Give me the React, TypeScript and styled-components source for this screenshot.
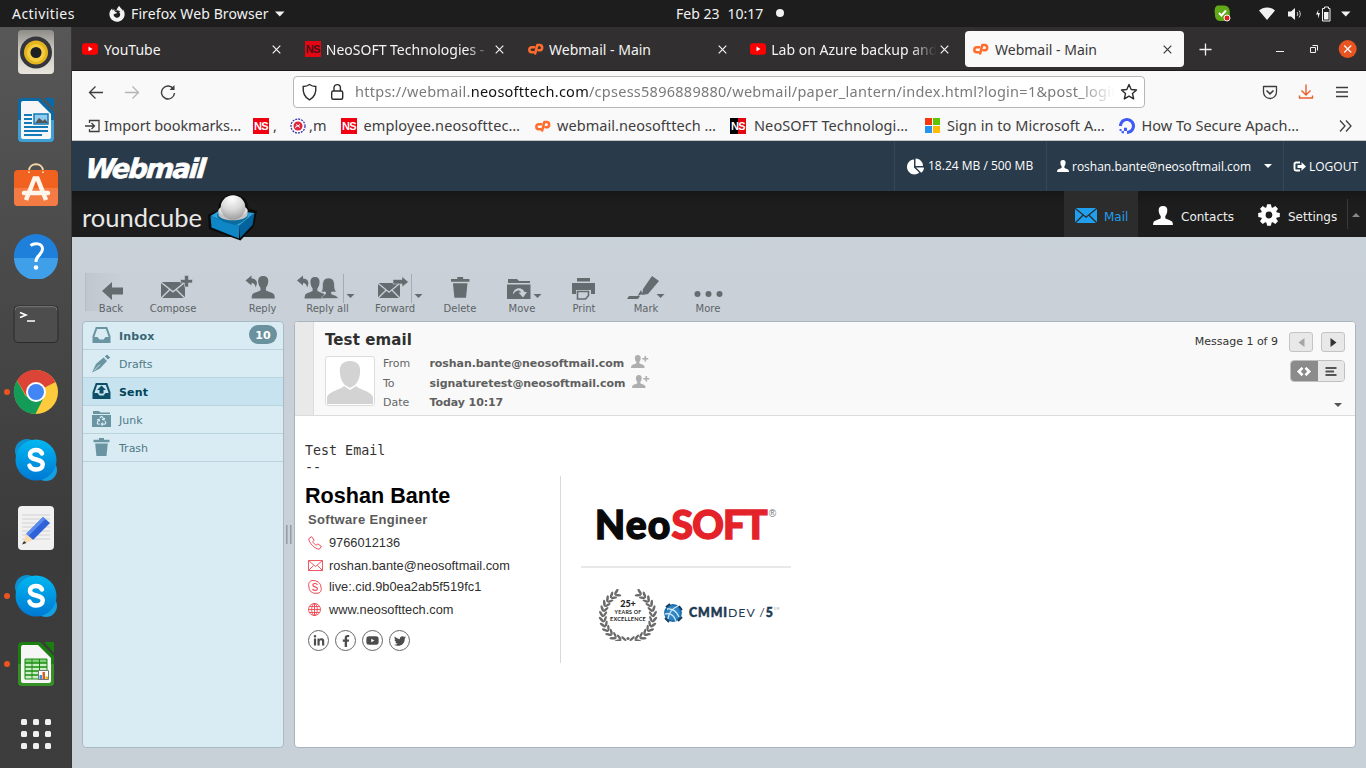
import React from 'react';
import styled, { createGlobalStyle } from 'styled-components';
import { FaFirefoxBrowser, FaChartPie, FaLinkedinIn, FaFacebookF, FaTwitter, FaYoutube, FaRecycle } from 'react-icons/fa';
import { SiDigitalocean } from 'react-icons/si';

const ui = '"Noto Sans", "Open Sans", sans-serif';
const rc = '"DejaVu Sans", Verdana, sans-serif';

const GlobalStyle = createGlobalStyle`
  * { box-sizing: border-box; }
  html, body { margin: 0; padding: 0; overflow: hidden; }
  svg { display: block; flex: none; }
`;

/* ---------- desktop shell ---------- */
const Desktop = styled.div`
  width: 1366px; height: 768px; overflow: hidden;
  display: grid; grid-template: 27px 741px / 72px 1294px;
`;
const TopBar = styled.header`
  grid-column: 1 / -1; background: #1d1d1d; color: #f2f2f2;
  font: 14px/27px ${ui}; display: flex; align-items: center; white-space: nowrap;
`;
const Activities = styled.div`width: 109px; padding-left: 12px; letter-spacing: .45px;`;
const AppMenu = styled.div`width: 567px; display: flex; align-items: center; gap: 6px; letter-spacing: .12px;`;
const Clock = styled.div`display: flex; align-items: center; gap: 8px; padding-bottom: 1px;`;
const Dot = styled.span`width: 8px; height: 8px; border-radius: 50%; background: #f2f2f2; margin-left: 5px;`;
const Tray = styled.div`margin-left: auto; display: flex; align-items: center; padding-right: 11px;`;
const TrayCell = styled.div<{ $w: number }>`width: ${p => p.$w}px; display: flex; justify-content: center;`;
const SkypeStatus = styled(TrayCell)`margin-right: 23px;`;

const Dock = styled.aside`
  background: linear-gradient(#575757, #3b3b3b 70%, #3d3d3d); overflow: hidden;
  display: flex; flex-direction: column; justify-content: flex-end; border-right: 1px solid #373737;
`;
const DockItem = styled.div<{ $running?: boolean }>`
  flex: none; height: 68px; display: grid; grid-template-columns: 13px 46px; align-items: center;
  &::before { content: ''; width: 6px; height: 6px; margin-left: 4px; border-radius: 50%; background: ${p => (p.$running ? '#e95420' : 'transparent')}; }
`;
const AppsGrid = styled.div`
  flex: none; height: 70px; padding: 21px 0 0 21px;
  display: grid; grid-template: repeat(3, 6px) / repeat(3, 6px); gap: 6px;
`;
const AppsDot = styled.span`background: #f0f0f0; border-radius: 1.5px;`;

/* ---------- browser ---------- */
const Browser = styled.main`display: flex; flex-direction: column; min-width: 0;`;
const TabStrip = styled.div`
  height: 44px; background: #322f30; border-bottom: 1px solid #1c1a1b; padding: 4px 9px 3px 2px;
  display: flex; gap: 3.75px;
`;
const Tab = styled.div<{ $active?: boolean }>`
  width: 219px; height: 36px; flex: none; border-radius: 4px; padding: 0 12px 0 8px;
  display: flex; align-items: center; gap: 5px; font: 14px/36px ${ui};
  background: ${p => (p.$active ? '#f9f9f9' : 'transparent')}; color: ${p => (p.$active ? '#3b3838' : '#f4f4f4')};
`;
const TabTitle = styled.span<{ $fade?: boolean; $gap?: number }>`
  flex: 1; overflow: hidden; white-space: nowrap; padding-top: 1px; margin-left: ${p => p.$gap || 0}px;
  ${p => p.$fade && 'margin-right: -3px; mask-image: linear-gradient(90deg, #000 84%, transparent 99%);'}
`;
const WindowControls = styled.div`margin-left: auto; display: flex; align-items: center;`;
const Toolbar = styled.div`height: 70px; background: #f9f9f9; border-bottom: 1px solid #c6c6c6;`;
const NavRow = styled.div`height: 41px; display: flex; align-items: center; padding: 0 8px 0 8px;`;
const NavButton = styled.div<{ $dim?: boolean }>`
  width: 36px; padding-left: 8px; height: 32px; display: flex; align-items: center; color: ${p => (p.$dim ? '#b5b5b5' : '#3d3d3d')};
`;
const UrlBox = styled.div`
  margin-left: 105px; width: 852px; height: 32px; border: 1px solid #b7b7b7; border-radius: 4px; background: #fff;
  display: flex; align-items: center; padding: 0 6px 0 7px; color: #2b2b2b;
`;
const Url = styled.div`
  margin: 0 5px 0 8px; width: 760px; overflow: hidden; white-space: nowrap; font: 14.5px/26px ${ui}; padding-bottom: 2px; letter-spacing: .26px; color: #7a7a7a;
  mask-image: linear-gradient(90deg, #000 95%, transparent 100%);
`;
const Host = styled.span`color: #111;`;
const NavTools = styled.div`margin-left: auto; display: flex; gap: 20px; padding-right: 8px; color: #3d3d3d;`;
const BookmarkRow = styled.div`height: 28px; display: flex; align-items: center; padding-left: 13px; font: 14.5px/26px ${ui}; color: #403d3d; white-space: nowrap;`;
const Bookmark = styled.div<{ $w: number; $gap: number; $ls?: number }>`
  width: ${p => p.$w}px; display: flex; align-items: center; gap: ${p => p.$gap - 16}px; letter-spacing: ${p => p.$ls || 0}px;
`;
const BookmarkName = styled.span`padding-bottom: 2px;`;
const NsBadge = styled.span<{ $bg: string; $fg?: string }>`
  width: 16px; height: 16px; flex: none; background: ${p => p.$bg}; color: ${p => p.$fg || '#fff'};
  font: bold 11px/16px "Liberation Sans Narrow", "Liberation Sans", sans-serif; letter-spacing: -.6px; text-align: center;
`;
const MsTiles = styled.span`
  width: 16px; height: 16px; display: grid; grid-template: 7px 7px / 7px 7px; gap: 1px; flex: none;
  & > i:nth-child(1) { background: #f5360e; } & > i:nth-child(2) { background: #62c400; }
  & > i:nth-child(3) { background: #2494ef; } & > i:nth-child(4) { background: #ffbb00; }
`;

/* ---------- webmail ---------- */
const CpHeader = styled.div`height: 50px; background: #293a4a; display: flex; color: #fff; font: 12px/49px "Open Sans", sans-serif; flex: none;`;
const WebmailLogo = styled.div`
  padding: 3px 0 0 14px; font: italic bold 27px/49px ${rc}; letter-spacing: -1.7px; margin-right: auto; color: #fff;
  -webkit-text-stroke: .7px #fff; transform: skewX(-5deg);
`;
const CpCell = styled.div<{ $w: number; $pad: number; $gap?: number }>`
  width: ${p => p.$w}px; padding-left: ${p => p.$pad}px; border-left: 1px solid #35485a; display: flex; align-items: center; gap: ${p => p.$gap || 3}px; white-space: nowrap;
`;
const Quota = styled.span`padding-bottom: 2px;`;
const CpCaret = styled.i`border: 4px solid transparent; border-top-color: #fff; border-bottom: 0; margin-left: 10px;`;
const RcHeader = styled.div`height: 46px; background: linear-gradient(#171717, #1d1d1d 30%); display: flex; flex: none; font: 12px/18px ${rc}; color: #eee;`;
const RcLogo = styled.div`
  display: flex; margin-right: auto; padding-left: 10px; font: 25.5px/52px Lato, sans-serif; color: #e8e8e8;
`;
const CubeSlot = styled.div`width: 48px; height: 46px; padding-top: 3px; margin-left: 6px; position: relative; z-index: 1;`;
const Task = styled.div<{ $w: number; $pad: number; $gap: number; $on?: boolean }>`
  width: ${p => p.$w}px; padding-left: ${p => p.$pad}px; display: flex; align-items: center; gap: ${p => p.$gap}px;
  background: ${p => (p.$on ? '#2c2c2c' : 'transparent')}; color: ${p => (p.$on ? '#1f9fee' : '#eee')};
  & > svg { margin-top: 2px; }
`;
const TaskName = styled.span`padding-top: 5px;`;
const TaskEdge = styled.div`width: 19px; margin: 8px 0; border-left: 1px solid #3a3a3a; display: flex; align-items: center; padding: 2px 0 0 4px;`;
const RcBody = styled.div`flex: 1; background: linear-gradient(#c9d1d9, #c9d0d8 40px, #c8d0d8); padding: 35px 10px 0 10px;`;
const Actions = styled.div`height: 49px; padding-left: 3px; display: flex;`;
const Action = styled.div<{ $w: number; $before?: number; $back?: boolean }>`
  width: ${p => p.$w}px; margin-left: ${p => p.$before || 0}px; height: 43px; font: 10px/12px ${rc}; color: #5e6467; text-align: center; white-space: nowrap;
  & > svg { color: #656c6f; fill: #656c6f; }
  ${p => p.$back && 'background: linear-gradient(90deg, #b4bbc4 0, #c0c7cf 2px, #c9d0d8 38px) no-repeat 0 1px / 40px 38px;'}
`;
const Panes = styled.div`display: flex; height: 427px;`;
const Folders = styled.nav`width: 202px; background: #d9ecf4; border: 1px solid #a9b9c4; border-radius: 4px; overflow: hidden;`;
const Folder = styled.div<{ $kind?: 'active' | 'unread' }>`
  height: 28px; border-bottom: 1px solid #bbd3da; padding: 0 6px 0 9px; display: flex; align-items: center; gap: 8px;
  font: ${p => (p.$kind ? 'bold' : 'normal')} 11px/27px ${rc}; letter-spacing: ${p => (p.$kind ? '.2px' : '0')};
  color: ${p => (p.$kind === 'active' ? '#004458' : p.$kind ? '#376572' : '#4d7886')};
  background: ${p => (p.$kind === 'active' ? '#c7e3ef' : 'transparent')};
  & > svg { color: ${p => (p.$kind === 'active' ? '#0d4f66' : '#6b94a2')}; margin-bottom: 1px; }
`;
const FolderName = styled.span`padding-top: 1px;`;
const Badge = styled.span`
  margin: 0 0 2px auto; width: 28px; height: 19px; border-radius: 9.5px; background: #6a919e; color: #fff; text-align: center; font: bold 11px/21px ${rc};
`;
const Splitter = styled.div`width: 10px; display: flex; justify-content: center; align-items: center; gap: 2px;`;
const Grip = styled.i`width: 2px; height: 19px; background: #949ba2; border-right: 1px solid #adb4bb;`;
const Message = styled.section`width: 1062px; background: #fff; border: 1px solid #a9b4be; border-radius: 4px; overflow: hidden; color: #333;`;
const MsgHead = styled.div`height: 94px; background: #f9f9f9; border-bottom: 1px solid #dcdcdc; display: flex; font: 11px/20px ${rc};`;
const Handle = styled.div`width: 19px; background: #e9e9e9; border-right: 1px solid #dcdcdc;`;
const MsgMain = styled.div`padding: 8px 0 0 11px;`;
const Subject = styled.h1`margin: 0; font: bold 15px/20px ${rc}; color: #2f2f2f; letter-spacing: .1px;`;
const Envelope = styled.div`display: flex; padding-top: 6px;`;
const Photo = styled.div`width: 50px; height: 50px; border: 1px solid #ddd; border-radius: 3px; background: #fff; padding: 4px 1px 1px;`;
const Fields = styled.div`padding-left: 8px; margin-top: -2px;`;
const Field = styled.div`display: grid; grid-template-columns: 46.5px auto; height: 19.5px; color: #666;`;
const Value = styled.b`display: flex; gap: 7px; letter-spacing: -.08px; color: #5f5f5f; & > svg { margin-top: 1px; }`;
const MsgNav = styled.div`margin-left: auto; width: 162px; padding: 10px 10px 0 0; display: flex; flex-direction: column; align-items: flex-end;`;
const Pager = styled.div`display: flex; gap: 8px; line-height: 20px; white-space: nowrap; color: #333;`;
const Count = styled.span`margin-right: 3px;`;
const PageButton = styled.span`
  width: 24px; height: 20px; border: 1px solid #c4c4c4; border-radius: 3px; background: #e8e8e8; display: grid; place-items: center;
`;
const Toggle = styled.div`display: flex; width: 55px; height: 22px; margin-top: 8px; border: 1px solid #c0c0c0; border-radius: 4px; overflow: hidden;`;
const ToggleHalf = styled.span<{ $on?: boolean }>`flex: 1; display: grid; place-items: center; background: ${p => (p.$on ? '#8b8b8b' : '#e8e8e8')};`;
const Expand = styled.i`margin: 21px 3px 0 0; border: 4px solid transparent; border-top-color: #555; border-bottom: 0;`;

const MsgBody = styled.div`padding: 26px 10px 0; `;
const Plain = styled.pre`margin: 0; font: 13.33px/17px "DejaVu Sans Mono", monospace; color: #333;`;
const Signature = styled.div`display: flex; height: 187px; font: 12.8px/16px "Liberation Sans", Arial, sans-serif; color: #333;`;
const SigLeft = styled.div`width: 256px; border-right: 1px solid #d9d9d9;`;
const SigName = styled.div`font-size: 21.6px; font-weight: bold; color: #000; line-height: 35px; height: 35px; padding-top: 2px;`;
const SigRole = styled.div`font-size: 13px; font-weight: bold; letter-spacing: .32px; color: #595959; height: 20px; line-height: 17px; padding-left: 3px;`;
const SigRow = styled.div<{ $h: number }>`height: ${p => p.$h}px; padding-left: 3px; display: grid; grid-template-columns: 21px auto; align-items: center; color: #2f2f2f;`;
const Social = styled.div`display: flex; gap: 6px; padding: 8px 0 0 3px;`;
const SocialButton = styled.span`
  width: 21px; height: 21px; border: 1px solid #666; border-radius: 50%; display: grid; place-items: center; color: #4c4c4c;
`;
const SigRight = styled.div`width: 210px; margin-left: 20px;`;
const NeoLogo = styled.div`
  height: 92px; padding: 20px 0 0 14px; border-bottom: 2px solid #e8e8e8; display: flex;
  font: 900 39px/57px Lato, sans-serif; letter-spacing: 1.2px; color: #0a0a0a; white-space: nowrap; margin-bottom: 21px;
  -webkit-text-stroke: 1.4px currentColor;
`;
const Red = styled.span`color: #e42229; letter-spacing: -.9px;`;
const Reg = styled.span`font: 10px/30px "Liberation Sans", sans-serif; color: #777; margin: 3px 0 0 2px; -webkit-text-stroke: 0;`;
const Awards = styled.div`display: flex; padding-left: 17px; align-items: center;`;
const Globe = styled.svg`margin: 0 0 5px 5px;`;
const Cmmi = styled.div`
  font: 12.3px/16px Lato, sans-serif; letter-spacing: .95px; color: #1d3a52; padding: 0 0 5px 6px; display: flex;
  & > b { font-weight: 900; -webkit-text-stroke: .5px currentColor; }
`;
const Tm = styled.span`font-size: 3px; line-height: 8px; color: #999;`;

/* ---------- drawings ---------- */
const Cross = ({ c = 'currentColor', s = 9 }) => (
  <svg width={s} height={s} viewBox="0 0 9 9" stroke={c} strokeWidth="1.2"><path d="M.7.7l7.6 7.6M8.3.7L.7 8.3" /></svg>
);
const YouTubeIcon = () => (
  <svg width="16" height="16" viewBox="0 0 16 16"><rect y="2.2" width="16" height="11.6" rx="3" fill="#f00" /><path d="M6.5 5.6v4.6l4-2.3z" fill="#fff" /></svg>
);
const CpMark = () => (
  <svg width="16" height="16" viewBox="0 0 16 16" fill="none" stroke="#ff6c2c" strokeWidth="2.500" strokeLinecap="round" strokeLinejoin="round">
    <path d="M6.300 6.200H4a2.500 2.500 0 0 0-.3 5h2" /><path d="M7.200 12.500L9.300 4h2.700a2.700 2.700 0 0 1 0 5.300h-1.500" />
  </svg>
);
const bust = 'M10 0c3 0 4.6 2 4.3 5-.2 2.600-.9 4.300-2 5.500v2.300c.4.9 5.900 2 7 3.700.5 1 .6 2.300.6 3.500H.1c0-1.200.1-2.500.6-3.500 1.100-1.700 6.600-2.800 7-3.700v-2.300c-1.100-1.200-1.800-2.900-2-5.500C5.400 2 7 0 10 0z';
const Person = ({ w = 20, h = 20, c = 'currentColor' }) => (
  <svg width={w} height={h} viewBox="0 0 20 20" preserveAspectRatio="none" fill={c}><path d={bust} /></svg>
);
const AddPerson = () => (
  <svg width="18" height="13" viewBox="0 0 18 13" fill="#aeaeae"><path d={bust} transform="scale(.68 .65)" /><path d="M13.500 1h1.600v2h2.200v1.500h-2.200v2h-1.600v-2h-2.200V3h2.200z" /></svg>
);
const Letter = ({ x = 0, y = 0, w = 22, h = 15, line = '#c9d0d8' }) => (
  <g transform={`translate(${x} ${y}) scale(${w / 22} ${h / 15})`}>
    <path d="M0 0h22v15H0z" fill="currentColor" />
    <path d="M0 .2l11 9 11-9M.2 15l8-8M21.800 15l-8-8" fill="none" stroke={line} strokeWidth="1.300" />
  </g>
);
const gearTeeth = [0, 45, 90, 135, 180, 225, 270, 315];
const Gear = () => (
  <svg width="22" height="22" viewBox="-11 -11 22 22" fill="#fff">
    {gearTeeth.map(a => <path key={a} d="M-2.700-7l.8-3.800h3.800l.8 3.800z" transform={`rotate(${a})`} />)}
    <circle r="5.700" fill="none" stroke="#fff" strokeWidth="4.600" />
  </svg>
);
const Cube = () => (
  <svg width="49" height="47" viewBox="0 0 49 47">
    <path d="M0 21l10-5C10.500 6 16 .5 25 .5S40 5 40.500 14.500L49 17l-3 15-13.500 14.500L1 35z" fill="#0b0b0b" />
    <path d="M2.500 22L31 32v12.500L3.500 33.500z" fill="#0f86c6" /><path d="M31 32L46.500 19 44.500 31 32 44z" fill="#04629c" />
    <path d="M2.500 22L13 15.500l33.500 3.500L31 32z" fill="#2aa2da" />
    <path d="M9 20l1 4 6 4 12 3 6-3 5-4 1-4z" fill="#0c6b9f" />
    <path d="M10.500 16h29v5c-2 7-27 7-29 0z" fill="#c4c4c4" />
    <ellipse cx="25" cy="16.500" rx="14.500" ry="6" fill="#dedede" />
    <circle cx="25" cy="13.500" r="12.300" fill="url(#ball)" />
    <defs><radialGradient id="ball" cx=".45" cy=".12" r=".95"><stop offset="0" stopColor="#fff" /><stop offset=".5" stopColor="#d8d8d8" /><stop offset="1" stopColor="#949494" /></radialGradient></defs>
  </svg>
);
const Drop = ({ x = 0 }) => <path d={`M${x - 4} 294h8l-4 4z`} />;
const Sep = ({ x = 0 }) => <path d={`M${x} 274v29`} stroke="#a3abb3" fill="none" />;
const ReplyArrow = ({ x = 0 }) => <path transform={`translate(${x} 275.500)`} d="M0 5L6 0v3c5 0 7 4 4 9-.2-3-1.500-4.500-4-4.500V10z" />;
const Art = ({ x = 0, w = 0, children }: { x?: number; w?: number; children?: React.ReactNode }) => (
  <svg width={w} height="31" viewBox={`${x} 272 ${w} 31`}>{children}</svg>
);
const Can = () => <><path d="M6.500 0h6v2H19v3H0V2h6.500z" /><path d="M2 6.500h15l-1.500 15h-12z" /></>;

const Speaker = () => (
  <svg width="46" height="46" viewBox="0 0 46 46">
    <defs><linearGradient id="spk" x2="0" y2="1"><stop stopColor="#8d8b87" /><stop offset=".4" stopColor="#c6c3bc" /><stop offset="1" stopColor="#e8e5dc" /></linearGradient></defs>
    <rect x="5" y="1" width="36" height="44" rx="4" fill="url(#spk)" /><circle cx="23" cy="23.500" r="16" fill="#34363b" />
    <circle cx="23" cy="23.500" r="12" fill="#e5b520" /><circle cx="23" cy="24" r="9" fill="#f3cd3f" /><circle cx="23" cy="23.500" r="5.500" fill="#1d1f22" />
  </svg>
);
const Doc = ({ dark = '#0b6aa5', light = '#3fa0d5', children }: { dark?: string; light?: string; children?: React.ReactNode }) => (
  <svg width="46" height="46" viewBox="0 0 46 46">
    <path d="M9 1h18l14 14v26a4 4 0 0 1-4 4H9a4 4 0 0 1-4-4V5a4 4 0 0 1 4-4z" fill={dark} /><path d="M5 23h36v18a4 4 0 0 1-4 4H9a4 4 0 0 1-4-4z" fill={light} />
    <path d="M10 4h15l13 13v23a2 2 0 0 1-2 2H10a2 2 0 0 1-2-2V6a2 2 0 0 1 2-2z" fill="#f6f6f6" /><path d="M31 1h9a1 1 0 0 1 1 1v10z" fill={dark} />{children}
  </svg>
);
const Skype = () => (
  <svg width="46" height="46" viewBox="0 0 46 46">
    <defs><linearGradient id="sky" x2="0" y2="1"><stop stopColor="#00b7f0" /><stop offset="1" stopColor="#0078d4" /></linearGradient></defs>
    <circle cx="14" cy="14" r="12" fill="#0f8fd0" /><circle cx="33" cy="33" r="11" fill="#12a0e0" /><circle cx="23" cy="23" r="20.500" fill="url(#sky)" />
    <path d="M29 16.500c-1-2.300-3-3.500-6-3.500-3.700 0-6 1.800-6 4.700 0 6.300 12.700 3.300 12.700 9.800 0 3.200-2.700 5-6.400 5-3.300 0-5.800-1.200-6.800-4" fill="none" stroke="#fff" strokeWidth="4.500" strokeLinecap="round" />
  </svg>
);
const Chrome = () => (
  <svg width="46" height="46" viewBox="0 0 46 46">
    <circle cx="23" cy="23" r="22" fill="#fdcb3b" /><path d="M23 23L4 11.500A22 22 0 0 1 42.500 13z" fill="#db4437" />
    <path d="M23 23l-.5 22A22 22 0 0 1 4 11.500l9 16z" fill="#149b57" /><path d="M22.500 45L31 28l-12 4-6-4.500z" fill="#149b57" />
    <path d="M4 11.500L14 28l3-12 6-3h19.500z" fill="#db4437" />
    <circle cx="23" cy="23" r="10" fill="#fff" /><circle cx="23" cy="23" r="8" fill="#4286f5" />
  </svg>
);
const rows = [0, 4, 8, 12, 16];

const leaves = Array.from({ length: 13 }, (_, i) => 28 + i * 12);
const Laurel = () => (
  <svg width="60" height="52" viewBox="-30 -27 60 52" fill="#6a6a6a">
    {[1, -1].map(s => leaves.map(a => (
      <g key={`${s}${a}`} transform={`scale(${s} 1) rotate(${a}) translate(0 -25)`}>
        <ellipse rx="3.500" ry="1.300" transform="translate(-1 -1.800) rotate(32)" /><ellipse rx="3.200" ry="1.200" transform="translate(-1 2) rotate(-32)" />
      </g>
    )))}
    <circle cy="22.500" r="1.600" />
    <g textAnchor="middle" fill="#222" fontFamily="Lato, sans-serif">
      <text y="-9.500" fontSize="9" fontWeight="900">25+</text><text y="-2" fontSize="5.300" fontWeight="700" letterSpacing=".25">YEARS OF</text><text y="5" fontSize="5.600" fontWeight="700" letterSpacing=".2">EXCELLENCE</text>
    </g>
  </svg>
);

type TabData = { icon: React.ReactNode; title: string; fade?: boolean; active?: boolean; gap?: number };
const tabs: TabData[] = [
  { icon: <YouTubeIcon />, title: 'YouTube', gap: 1 },
  { icon: <NsBadge $bg="#e30613" $fg="#4a1016">NS</NsBadge>, title: 'NeoSOFT Technologies - ', fade: true },
  { icon: <CpMark />, title: 'Webmail - Main', gap: 0.5 },
  { icon: <YouTubeIcon />, title: 'Lab on Azure backup and', fade: true },
  { icon: <CpMark />, title: 'Webmail - Main', active: true, gap: 1 },
];

export default function App() {
  return (
    <Desktop>
      <GlobalStyle />
      <TopBar>
        <Activities>Activities</Activities>
        <AppMenu>
          <FaFirefoxBrowser size={16} />Firefox Web Browser
          <svg width="10" height="6" viewBox="0 0 10 6" fill="#f2f2f2"><path d="M0 .5h9.500L4.800 5.500z" /></svg>
        </AppMenu>
        <Clock><span>Feb 23</span><span>10:17</span><Dot /></Clock>
        <Tray>
          <SkypeStatus $w={16}>
            <svg width="17" height="17" viewBox="0 0 17 17"><path d="M4 .5h6c4 0 6 3 5.800 7 .5 5-2 8.500-6 8.500H6C2.500 16 .8 13 1 9.500.3 5 .5 1 4 .5z" fill="#60a917" /><path d="M5 8l2.500 2.500 4.500-5" fill="none" stroke="#fff" strokeWidth="2" /><circle cx="13" cy="13" r="3" fill="#e02020" stroke="#fff" /></svg>
          </SkypeStatus>
          <TrayCell $w={28}><svg width="16" height="13" viewBox="0 0 16 13" fill="#f2f2f2"><path d="M0 3.500C4.500-.5 11.500-.5 16 3.500L8 13z" /></svg></TrayCell>
          <TrayCell $w={28}><svg width="16" height="14" viewBox="0 0 16 14" fill="#f2f2f2"><path d="M1 4.500h3L8 1v12L4 9.500H1z" /><path d="M10 5c1 1 1 3 0 4M12 3.500c1.700 2 1.700 5 0 7" fill="none" stroke="#ccc" /></svg></TrayCell>
          <TrayCell $w={28}><svg width="16" height="16" viewBox="0 0 16 16"><path d="M3.500 3.500L1 8.500h2v4L5 7H3z" fill="#f2f2f2" /><path d="M7.500 2.500h2V1h4v1.500h1.500v12.500h-7.500z" fill="none" stroke="#f2f2f2" /><path d="M9 6h4.500v7.500H9z" fill="#f2f2f2" /></svg></TrayCell>
          <TrayCell $w={18}><svg width="10" height="6" viewBox="0 0 10 6" fill="#f2f2f2"><path d="M0 .5h9.500L4.800 5.500z" /></svg></TrayCell>
        </Tray>
      </TopBar>

      <Dock>
        <DockItem><Speaker /></DockItem>
        <DockItem>
          <Doc><path d="M11 18h8M11 22h8M11 26h8M11 30h24M11 34h24M11 38h18" stroke="#1379b8" strokeWidth="2" /><path d="M21 17h14v10H21z" fill="#8fcdf0" stroke="#1379b8" strokeWidth="1.500" /><path d="M22 26l4-5 4 3 2-2 3 4z" fill="#555" /></Doc>
        </DockItem>
        <DockItem>
          <svg width="46" height="46" viewBox="0 3 46 46" overflow="visible"><path d="M16 9c0-9 14-9 14 0" fill="none" stroke="#f3d9a6" strokeWidth="2" /><rect x="1" y="8" width="44" height="36" rx="4" fill="#f1611f" /><path d="M1 26h44v14a4 4 0 0 1-4 4H5a4 4 0 0 1-4-4z" fill="#f47c44" /><path d="M16 9.500V11M30 9.500V11" stroke="#f3d9a6" strokeWidth="2" /><path d="M13 38L21.500 16.500h3L33 38" fill="none" stroke="#fff5ea" strokeWidth="4.500" /><path d="M11 31h24" stroke="#fff5ea" strokeWidth="4.500" strokeLinecap="round" /></svg>
        </DockItem>
        <DockItem>
          <svg width="46" height="46" viewBox="0 0 46 46"><circle cx="23" cy="23" r="22" fill="#1f80dc" /><path d="M1 25a22 22 0 0 0 44 0z" fill="#3f9fe8" /><path d="M17.500 12.500c4-3 12-2.500 12 3.500 0 6-7 6.500-6.500 13" fill="none" stroke="#fff" strokeWidth="3" /><circle cx="23" cy="34.500" r="2.300" fill="#fff" /></svg>
        </DockItem>
        <DockItem>
          <svg width="46" height="46" viewBox="0 0 46 46"><rect x="1" y="5" width="44" height="36.500" rx="4" fill="#4d4d4d" stroke="#2a2a2a" /><path d="M2 9a3.500 3.500 0 0 1 3.500-3.300h35A3.500 3.500 0 0 1 44 9" fill="none" stroke="#7a7a7a" /><path d="M7 11.500l6 2.500-6 2.500M14 20h8" fill="none" stroke="#fff" strokeWidth="1.600" /></svg>
        </DockItem>
        <DockItem $running><Chrome /></DockItem>
        <DockItem><Skype /></DockItem>
        <DockItem>
          <svg width="46" height="46" viewBox="0 0 46 46"><rect x="5" y="1" width="36" height="44" rx="4" fill="#f1f1f1" /><path d="M9 10h28M9 14h28M9 18h28M9 22h28M9 26h28M9 30h28M9 34h28" stroke="#d2d2d2" /><path d="M13 29l17-17 7 6-17 17z" fill="#2f62d9" /><path d="M13 29l17-17 2.500 2-17 17z" fill="#5b8cf0" /><path d="M13 29l7 6-10 4z" fill="#f7dcb4" /><path d="M11 36l2.500 2L9 39.500z" fill="#333" /></svg>
        </DockItem>
        <DockItem $running><Skype /></DockItem>
        <DockItem $running>
          <Doc dark="#1c7d11" light="#369026">
            <path d="M12 18h22v20H12z" fill="#c9f0c4" /><path d="M12 18h22v4H12z" fill="#7ecf78" />
            {rows.map(r => <path key={r} d={`M12 ${18 + r}h22v4H12zM19 ${18 + r}v4M26.500 ${18 + r}v4`} fill="none" stroke="#1c8a12" />)}
            <path d="M25.500 29.500h10v9h-10z" fill="#fff" stroke="#777" /><path d="M26.500 34h2.500v4h-2.500z" fill="#3b92d6" /><path d="M29.500 31h2.500v7h-2.500z" fill="#d95f1e" /><path d="M32.500 35.500h2.500v2.500h-2.500z" fill="#e8b320" />
          </Doc>
        </DockItem>
        <AppsGrid>{Array.from({ length: 9 }, (_, i) => <AppsDot key={i} />)}</AppsGrid>
      </Dock>

      <Browser>
        <TabStrip>
          {tabs.map((t, i) => (
            <Tab key={i} $active={t.active}>{t.icon}<TabTitle $fade={t.fade} $gap={t.gap}>{t.title}</TabTitle><Cross /></Tab>
          ))}
          <WindowControls>
            <svg width="166" height="22" viewBox="1191 38 166 22" fill="none" stroke="#f2f2f2">
              <path d="M1199.500 49.500h12M1205.500 43.500v12" strokeWidth="1.300" /><path d="M1276 51.500h8" /><path d="M1310.500 47.500h5v5h-5zM1312.500 45.500h5v5" /><circle cx="1347.700" cy="49" r="9" fill="#e95420" stroke="none" /><path d="M1344.200 45.500l7 7M1351.200 45.500l-7 7" strokeWidth="1.400" />
            </svg>
          </WindowControls>
        </TabStrip>
        <Toolbar>
          <NavRow>
            <NavButton><svg width="16" height="16" viewBox="0 0 16 16" fill="none" stroke="currentColor" strokeWidth="1.300"><path d="M15 8.500H1.500M7.500 2.500l-6 6 6 6" /></svg></NavButton>
            <NavButton $dim><svg width="16" height="16" viewBox="0 0 16 16" fill="none" stroke="currentColor" strokeWidth="1.300"><path d="M1 8.500h13.500M8.500 2.500l6 6-6 6" /></svg></NavButton>
            <NavButton><svg width="16" height="16" viewBox="0 0 16 16" fill="none" stroke="currentColor" strokeWidth="1.400"><path d="M13.500 5A6.500 6.500 0 1 0 14.500 9" /><path d="M14.500 1v5h-5z" fill="currentColor" stroke="none" /></svg></NavButton>
            <UrlBox>
              <svg width="46" height="18" viewBox="0 0 46 18" fill="none" stroke="currentColor" strokeWidth="1.400"><path d="M8.500 1.500c2 1.500 4 2 6.300 2 .5 6-1.500 11-6.300 13.300C3.700 14.500 1.700 9.500 2.200 3.500c2.300 0 4.300-.5 6.300-2z" /><rect x="30.700" y="8" width="11" height="8.300" rx="1.500" /><path d="M33 8V4.800a3.200 3.200 0 0 1 6.400 0V8" /></svg>
              <Url>https://webmail.<Host>neosofttech.com</Host>/cpsess5896889880/webmail/paper_lantern/index.html?login=1&amp;post_login</Url>
              <svg width="18" height="18" viewBox="0 0 18 18" fill="none" stroke="currentColor" strokeWidth="1.400" strokeLinejoin="round"><path d="M9 1.500l2.200 5 5.300.5-4 3.600 1.200 5.300L9 13.200 4.300 15.900l1.200-5.300-4-3.600 5.300-.5z" /></svg>
            </UrlBox>
            <NavTools>
              <svg width="16" height="16" viewBox="0 0 16 16" fill="none" stroke="currentColor" strokeWidth="1.300"><path d="M1.500 2.500h13V8a6.500 6.500 0 0 1-13 0z" strokeLinejoin="round" /><path d="M4.500 6.500L8 9.800l3.500-3.300" strokeWidth="1.600" /></svg>
              <svg width="16" height="16" viewBox="0 0 16 16" fill="none" stroke="#e9602f" strokeWidth="1.400"><path d="M8 .5v10M3.500 6.500L8 11l4.500-4.500M1.500 11.500v2.500h13v-2.500" /></svg>
              <svg width="16" height="16" viewBox="0 0 16 16" stroke="currentColor" strokeWidth="1.300"><path d="M2 3.500h12M2 8h12M2 12.500h12" /></svg>
            </NavTools>
          </NavRow>
          <BookmarkRow>
            <Bookmark $w={168} $gap={19} $ls={-0.12}>
              <svg width="16" height="16" viewBox="0 0 16 16" fill="none" stroke="currentColor" strokeWidth="1.300"><path d="M4.500 5V2.500h9.500v11H4.500V11M0 8h9.500M6.500 5l3 3-3 3" /></svg><BookmarkName>Import bookmarks…</BookmarkName>
            </Bookmark>
            <Bookmark $w={37} $gap={20}><NsBadge $bg="#f00010">NS</NsBadge><BookmarkName>,</BookmarkName></Bookmark>
            <Bookmark $w={51} $gap={19}>
              <svg width="16" height="16" viewBox="0 0 16 16"><circle cx="8" cy="8" r="7" fill="#fff" stroke="#3a3aa8" strokeWidth="1.300" strokeDasharray="2 1" /><circle cx="8" cy="8" r="4.500" fill="#e0263c" /><path d="M5 9.500l5-3M6 6.500l4 3" stroke="#fff" /></svg><BookmarkName>,m</BookmarkName>
            </Bookmark>
            <Bookmark $w={194} $gap={22.5} $ls={0.12}><NsBadge $bg="#f00010">NS</NsBadge><BookmarkName>employee.neosofttec…</BookmarkName></Bookmark>
            <Bookmark $w={195} $gap={22} $ls={0.05}><CpMark /><BookmarkName>webmail.neosofttech …</BookmarkName></Bookmark>
            <Bookmark $w={195} $gap={24} $ls={0.1}><NsBadge $bg="linear-gradient(90deg, #000 50%, #e30613 50%)">NS</NsBadge><BookmarkName>NeoSOFT Technologi…</BookmarkName></Bookmark>
            <Bookmark $w={194} $gap={22} $ls={0.06}><MsTiles><i /><i /><i /><i /></MsTiles><BookmarkName>Sign in to Microsoft A…</BookmarkName></Bookmark>
            <Bookmark $w={220} $gap={22.5}><SiDigitalocean size={16} color="#3f5af5" /><BookmarkName>How To Secure Apach…</BookmarkName></Bookmark>
            <svg width="14" height="14" viewBox="0 0 14 14" fill="none" stroke="currentColor" strokeWidth="1.300"><path d="M1 1.500L6 7l-5 5.500M7 1.500L12 7l-5 5.500" /></svg>
          </BookmarkRow>
        </Toolbar>

        <CpHeader>
          <WebmailLogo>Webmail</WebmailLogo>
          <CpCell $w={152} $pad={12} $gap={4}><FaChartPie size={17} /><Quota>18.24 MB / 500 MB</Quota></CpCell>
          <CpCell $w={237} $pad={10}><Person w={12} h={12} />roshan.bante@neosoftmail.com<CpCaret /></CpCell>
          <CpCell $w={83} $pad={9}>
            <svg width="13" height="11" viewBox="0 0 13 11"><path d="M7 1.500H3A1.500 1.500 0 0 0 1.500 3v5A1.500 1.500 0 0 0 3 9.500h4" fill="none" stroke="#fff" strokeWidth="1.900" /><path d="M4.500 4h4V1.200l4.500 4.300-4.500 4.300V7h-4z" fill="#fff" /></svg>LOGOUT
          </CpCell>
        </CpHeader>
        <RcHeader>
          <RcLogo>roundcube<CubeSlot><Cube /></CubeSlot></RcLogo>
          <Task $on $w={74} $pad={11} $gap={7}><svg width="22" height="15" viewBox="0 0 22 15"><Letter line="#2c2c2c" /></svg><TaskName>Mail</TaskName></Task>
          <Task $w={108} $pad={15} $gap={8}><Person w={20} h={19} c="#fff" /><TaskName>Contacts</TaskName></Task>
          <Task $w={101} $pad={12} $gap={8}><Gear /><TaskName>Settings</TaskName></Task>
          <TaskEdge><svg width="8" height="4" viewBox="0 0 8 4"><path d="M4 0l4 4H0z" fill="#888" /></svg></TaskEdge>
        </RcHeader>

        <RcBody>
          <Actions>
            <Action $w={52} $back><Art x={85} w={52}><path d="M102 291l10-9v5.500h11v7h-11v5.500z" /></Art>Back</Action>
            <Action $w={72}><Art x={137} w={72}><Letter x={161} y={282} w={24} h={16} /><path d="M184.500 275.500h4v4h4v3.500h-4v4h-4v-4h-4v-3.500h4z" stroke="#c9d0d8" strokeWidth=".6" /></Art>Compose</Action>
            <Action $w={53} $before={27}><Art x={236} w={53}><ReplyArrow x={245.5} /><path d={bust} transform="translate(251.500 276) scale(1.170 1.120)" /></Art>Reply</Action>
            <Action $w={77}><Art x={289} w={77}><ReplyArrow x={297} /><path d={bust} transform="translate(304.500 277) scale(1.050 1.080)" /><path d="M328.500 278c5 0 6 4 6 8 0 3 1 5 2 6h-5v2c2 1 6 1.500 7 4.500h-17c0-2.500 3-3.500 4-4.500v-2h-4.500c1-1 1.500-3 1.500-6 0-4 1-8 6-8z" stroke="#c9d0d8" strokeWidth=".6" /><Sep x={343.5} /><Drop x={350.5} /></Art>Reply all</Action>
            <Action $w={58}><Art x={366} w={58}><Letter x={378} y={283} w={22} h={15} /><path d="M393 279.500h9v-3l6.500 5.500-6.500 5v-3h-9z" stroke="#c9d0d8" strokeWidth=".6" /><Sep x={411.5} /><Drop x={418.5} /></Art>Forward</Action>
            <Action $w={62} $before={5}><Art x={429} w={62}><g transform="translate(451 277) scale(.97)"><Can /></g></Art>Delete</Action>
            <Action $w={62}><Art x={491} w={62}><path d="M508 279h9l2 2h11v2h-22zM507 284.500h23.500v14.500H507z" /><path d="M513 294.500c0-7 9-8.500 11.500-2.500h2.500l-4 5.500-4.500-5h2.500c-1.500-3-5-2.500-8 2z" fill="#c9d0d8" /><Drop x={537.5} /></Art>Move</Action>
            <Action $w={62}><Art x={553} w={62}><path d="M577 278h13v3.500h-13zM572 283h23v11h-4v-4h-15v4h-4z" /><path d="M577.500 291.500h11v4l-3 3.500h-8z" fill="none" stroke="#656c6f" strokeWidth="1.600" /></Art>Print</Action>
            <Action $w={62}><Art x={615} w={62}><path d="M652 276l7 5-11 13-6 1 1-6zM641 290l1.500 4-5 2zM629 296h11l-2 3h-11z" /><Drop x={660.5} /></Art>Mark</Action>
            <Action $w={62}><Art x={677} w={62}><circle cx="697.500" cy="294" r="3" /><circle cx="708.500" cy="294" r="3" /><circle cx="719.500" cy="294" r="3" /></Art>More</Action>
          </Actions>

          <Panes>
            <Folders>
              <Folder $kind="unread"><svg width="19" height="16" viewBox="0 0 19 16"><path d="M4.500 1h10l3 8.500V15h-16V9.500z" fill="none" stroke="currentColor" strokeWidth="2" /><path d="M1 10h4.500l2 2.500h4L13.500 10H18v6H1z" fill="currentColor" /></svg><FolderName>Inbox</FolderName><Badge>10</Badge></Folder>
              <Folder><svg width="19" height="19" viewBox="0 0 19 19" fill="currentColor"><path d="M0 18.500L4 10l7.500-6.500 3.500 3.500L8 14.500z" /><path d="M12.500 2.500L15 0l3.500 3.500L16 6zM2 16.500l6-6" stroke="#d9ecf4" strokeWidth=".8" /></svg><FolderName>Drafts</FolderName></Folder>
              <Folder $kind="active"><svg width="19" height="16" viewBox="0 0 19 16"><path d="M4.500 1h10l3 8.500V15h-16V9.500z" fill="none" stroke="currentColor" strokeWidth="2" /><path d="M1 10h4.500l2 2.500h4L13.500 10H18v6H1zM9.500 2.500l4.500 4.500h-2.500v3.500h-4V7H5z" fill="currentColor" /></svg><FolderName>Sent</FolderName></Folder>
              <Folder><svg width="19" height="16" viewBox="0 0 19 16" fill="currentColor"><path d="M1 0h6l1.500 1.500H18V3H1zM0 4h19v12H0z" /><g color="#d9ecf4"><FaRecycle x={4.5} y={5} size={10} /></g></svg><FolderName>Junk</FolderName></Folder>
              <Folder><svg width="19" height="19" viewBox="0 0 19 19" fill="currentColor"><g transform="translate(1.500 0) scale(.84)"><Can /></g></svg><FolderName>Trash</FolderName></Folder>
            </Folders>
            <Splitter><Grip /><Grip /></Splitter>
            <Message>
              <MsgHead>
                <Handle />
                <MsgMain>
                  <Subject>Test email</Subject>
                  <Envelope>
                    <Photo><svg width="46" height="43" viewBox="0 0 46 43" fill="#d3d3d3"><path d="M23 0c8 0 11 5 10 12-.5 6-3 10-5 12l-5 3-5-3c-2-2-4.500-6-5-12C12 5 15 0 23 0z" /><path d="M17 25l6 4 6-4c2 3 15 5 17 11v7H0v-7c2-6 15-8 17-11z" /></svg></Photo>
                    <Fields>
                      <Field>From<Value>roshan.bante@neosoftmail.com<AddPerson /></Value></Field>
                      <Field>To<Value>signaturetest@neosoftmail.com<AddPerson /></Value></Field>
                      <Field>Date<Value>Today 10:17</Value></Field>
                    </Fields>
                  </Envelope>
                </MsgMain>
                <MsgNav>
                  <Pager>
                    <Count>Message 1 of 9</Count>
                    <PageButton><svg width="7" height="9" viewBox="0 0 7 9"><path d="M6.500 0v9L.5 4.500z" fill="#a5a5a5" /></svg></PageButton>
                    <PageButton><svg width="7" height="9" viewBox="0 0 7 9"><path d="M.5 0v9l6-4.500z" fill="#333" /></svg></PageButton>
                  </Pager>
                  <Toggle>
                    <ToggleHalf $on><svg width="14" height="9" viewBox="0 0 14 9" fill="none" stroke="#fff" strokeWidth="2.600"><path d="M5.500.8L1.800 4.500l3.700 3.700M8.500.8l3.700 3.700-3.700 3.700" /></svg></ToggleHalf>
                    <ToggleHalf><svg width="12" height="9" viewBox="0 0 12 9" stroke="#555" strokeWidth="1.800"><path d="M.5 1h11M.5 4.500h8.500M.5 8h11" /></svg></ToggleHalf>
                  </Toggle>
                  <Expand />
                </MsgNav>
              </MsgHead>
              <MsgBody>
                <Plain>{'Test Email\n--'}</Plain>
                <Signature>
                  <SigLeft>
                    <SigName>Roshan Bante</SigName>
                    <SigRole>Software Engineer</SigRole>
                    <SigRow $h={23}><svg width="14" height="14" viewBox="0 0 16 16" fill="none" stroke="#ee4550" strokeWidth="1.100"><path d="M4 .8L1 3c-1 4 8 13 12 12l2.300-3-4-3-2 1.500C8 10 6 8 5.500 6.500L7 4.800z" strokeLinejoin="round" /></svg>9766012136</SigRow>
                    <SigRow $h={23}><svg width="15" height="11" viewBox="0 0 15 11" fill="none" stroke="#ee4550" strokeWidth=".9"><path d="M.5.5h14v10H.5zM.5.5l7 6 7-6M.5 10.500l5-5M14.500 10.500l-5-5" /></svg>roshan.bante@neosoftmail.com</SigRow>
                    <SigRow $h={20}><svg width="14" height="14" viewBox="0 0 14 14" fill="none" stroke="#ee4550"><path d="M4 .6c5-.5 9 2.400 9 7 1 3-1 6-4 5.600C4 13.800 1 11 1 7 0 4 1 1 4 .6z" /><path d="M9.300 5C9 3 5 3 4.800 5c0 2.500 4.600 1.300 4.600 3.700C9.200 11 5 11 4.600 8.800" strokeWidth="1.200" /></svg>live:.cid.9b0ea2ab5f519fc1</SigRow>
                    <SigRow $h={25}><svg width="13" height="13" viewBox="0 0 13 13" fill="none" stroke="#ee4550" strokeWidth=".9"><circle cx="6.500" cy="6.500" r="6" /><ellipse cx="6.500" cy="6.500" rx="2.800" ry="6" /><path d="M6.500.5v12M.5 6.500h12M1.500 3.500h10M1.500 9.500h10" /></svg>www.neosofttech.com</SigRow>
                    <Social>
                      <SocialButton><FaLinkedinIn size={12} /></SocialButton>
                      <SocialButton><FaFacebookF size={12} /></SocialButton>
                      <SocialButton><FaYoutube size={13} /></SocialButton>
                      <SocialButton><FaTwitter size={12} /></SocialButton>
                    </Social>
                  </SigLeft>
                  <SigRight>
                    <NeoLogo>Neo<Red>SOFT</Red><Reg>®</Reg></NeoLogo>
                    <Awards>
                      <Laurel />
                      <Globe width="20" height="20" viewBox="-10 -10 20 20" fill="none" stroke="#1d6fae" strokeWidth="1.800"><circle r="8" fill="#2f86c6" /><path d="M-6-4Q2-5 6 4M-5 6Q-4-3 5-7M-8 1Q0-1 3 8" stroke="#d7ebf7" strokeWidth="1.300" /><path d="M-7-6L-3-9M6-7l3 4M-8 5l4 4M5 8l4-4" stroke="#123a5a" /></Globe>
                      <Cmmi><b>CMMI</b>DEV /<b>5</b><Tm>SM</Tm></Cmmi>
                    </Awards>
                  </SigRight>
                </Signature>
              </MsgBody>
            </Message>
          </Panes>
        </RcBody>
      </Browser>
    </Desktop>
  );
}
